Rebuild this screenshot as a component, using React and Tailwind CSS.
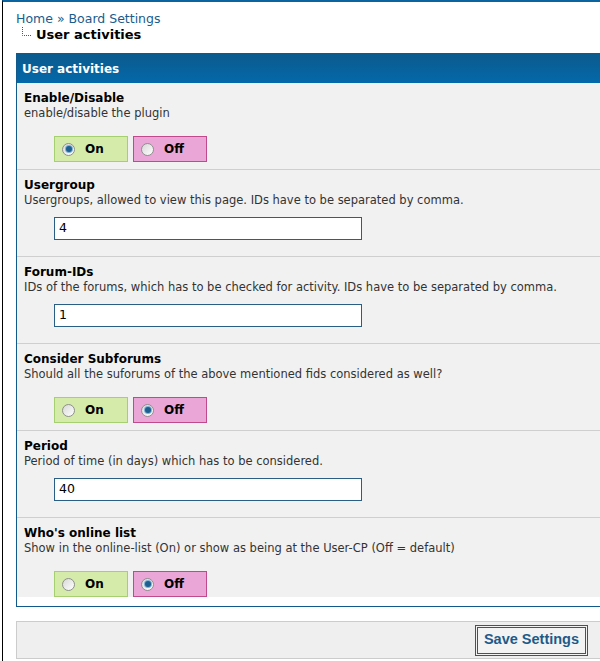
import React from "react";

const rows = [
  {
    title: "Enable/Disable",
    desc: "enable/disable the plugin",
    type: "radio",
    value: "on",
  },
  {
    title: "Usergroup",
    desc: "Usergroups, allowed to view this page. IDs have to be separated by comma.",
    type: "text",
    value: "4",
  },
  {
    title: "Forum-IDs",
    desc: "IDs of the forums, which has to be checked for activity. IDs have to be separated by comma.",
    type: "text",
    value: "1",
  },
  {
    title: "Consider Subforums",
    desc: "Should all the suforums of the above mentioned fids considered as well?",
    type: "radio",
    value: "off",
  },
  {
    title: "Period",
    desc: "Period of time (in days) which has to be considered.",
    type: "text",
    value: "40",
  },
  {
    title: "Who's online list",
    desc: "Show in the online-list (On) or show as being at the User-CP (Off = default)",
    type: "radio",
    value: "off",
  },
];

function Radio({ checked }) {
  return (
    <span className="flex h-[13px] w-[13px] items-center justify-center rounded-full border border-[#8f8f8f] bg-gradient-to-br from-[#d8d8d8] to-white">
      {checked && (
        <span className="h-[6px] w-[6px] rounded-full bg-[#1d5f8f] shadow-[0_0_0_1px_#7fb0d6]" />
      )}
    </span>
  );
}

function YesNo({ value, last }) {
  return (
    <div className={"mt-[16px] flex gap-[5px] pl-[30px] " + (last ? "mb-[9px]" : "mb-[7px]")}>
      <label className="flex h-[26px] w-[74px] items-center border border-[#a6cf72] bg-[#d5eba9] pl-[7px]">
        <Radio checked={value === "on"} />
        <span className="ml-[10px] text-[12px] font-bold text-black">On</span>
      </label>
      <label className="flex h-[26px] w-[74px] items-center border border-[#c04a8c] bg-[#eba6d8] pl-[7px]">
        <Radio checked={value === "off"} />
        <span className="ml-[10px] text-[12px] font-bold text-black">Off</span>
      </label>
    </div>
  );
}

function TextField({ value }) {
  return (
    <div className="mt-[10px] mb-[16px] pl-[30px]">
      <div className="flex h-[23px] w-[308px] items-center border border-[#2a5f85] bg-white pl-[4px] text-[12.5px] text-black">
        {value}
      </div>
    </div>
  );
}

export default function App() {
  return (
    <div className="min-h-[661px] w-full overflow-hidden bg-white pl-[2px] font-['DejaVu_Sans',sans-serif]">
      <div className="min-h-[661px] border-t-2 border-l border-t-[#0a64a0] border-l-black pl-[13px] pt-[9px]">
        <div className="text-[12.5px] leading-[16px] text-[#1a5c8c]">
          Home » Board Settings
        </div>
        <div className="flex items-center leading-[16px]">
          <svg width="14" height="12" viewBox="0 0 14 12" className="ml-[5px] -mt-[4px]">
            <path d="M1.5 0 V8.5 H11" stroke="#555" strokeWidth="1" strokeDasharray="1 1" fill="none" />
          </svg>
          <span className="ml-[1px] text-[13px] font-bold text-black">User activities</span>
        </div>

        <div className="mt-[10px] w-[600px] border border-[#12598b]">
          <div className="flex h-[29px] items-center bg-gradient-to-b from-[#0b5a8d] to-[#0369aa] pl-[5px] text-[12px] font-bold text-white">
            User activities
          </div>
          {rows.map((row, i) => (
            <div
              key={row.title}
              className={
                "bg-[#f1f1f1] pl-[7px] pt-[7px] " +
                (i < rows.length - 1 ? "border-b border-[#cfcfcf]" : "")
              }
            >
              <div className="text-[12px] font-bold leading-[16px] text-black">
                {row.title}
              </div>
              <div className="text-[11.5px] leading-[14px] text-[#333]">
                {row.desc}
              </div>
              {row.type === "radio" ? (
                <YesNo value={row.value} last={i === rows.length - 1} />
              ) : (
                <TextField value={row.value} />
              )}
            </div>
          ))}
        </div>

        <div className="mt-[14px] flex h-[38px] w-[600px] items-center border border-[#cccccc] bg-[#efefef] pl-[458px]">
          <button className="h-[31px] w-[113px] border border-[#1e5f8c] bg-[#f3f3f3] p-[1px]">
            <span className="flex h-full w-full items-center justify-center border border-[#1e5f8c] font-['Liberation_Sans',sans-serif] text-[14.5px] font-bold text-[#1e5a88]">
              Save Settings
            </span>
          </button>
        </div>
      </div>
    </div>
  );
}
